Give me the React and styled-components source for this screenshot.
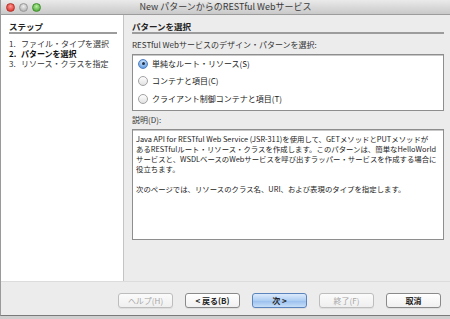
import React from "react";
import styled, { createGlobalStyle } from "styled-components";

const Global = createGlobalStyle`
  html, body { margin: 0; padding: 0; background: #cfcfcf; }
  body { font-family: "Noto Sans CJK JP", "DejaVu Sans", sans-serif; color: #222; }
`;

const Window = styled.div`
  width: 450px;
  height: 316px;
  box-sizing: border-box;
  border-left: 1px solid #9a9a9a;
  border-bottom: 1px solid #7a7a7a;
  background: #ececec;
  display: flex;
  flex-direction: column;
`;

const TitleBar = styled.div`
  height: 15px;
  flex: none;
  box-sizing: border-box;
  background: linear-gradient(#eaeaea, #c9c9c9);
  border-bottom: 1px solid #9c9c9c;
  display: flex;
  align-items: center;
  position: relative;
  padding-left: 5px;
`;

const Lights = styled.div`
  display: flex;
  gap: 4px;
`;

const Light = styled.span`
  width: 9px;
  height: 9px;
  border-radius: 50%;
  box-sizing: border-box;
  border: 1px solid ${(p) => p.$edge};
  background: radial-gradient(circle at 50% 35%, ${(p) => p.$hi}, ${(p) => p.$c} 70%);
`;

const Title = styled.div`
  position: absolute;
  left: 0;
  right: 0;
  top: 0;
  bottom: 0;
  text-align: center;
  font-size: 9px;
  line-height: 14px;
  color: #3a3a3a;
  pointer-events: none;
`;

const Body = styled.div`
  flex: none;
  height: 266px;
  display: flex;
`;

const LeftPane = styled.div`
  width: 123px;
  flex: none;
  box-sizing: border-box;
  background: #fff;
  border-right: 1px solid #c4c4c4;
  padding: 6px 6px 0 8px;
`;

const RightPane = styled.div`
  flex: 1;
  padding: 6px 6px 0 8px;
  display: flex;
  flex-direction: column;
`;

const Heading = styled.div`
  font-size: 8.5px;
  font-weight: bold;
  line-height: 11px;
  padding-bottom: 0;
  border-bottom: 2px solid #9c9c9c;
  margin-bottom: ${(p) => p.$gap || 4}px;
`;

const StepList = styled.ol`
  list-style: none;
  margin: 0;
  padding: 0;
  font-size: 8px;
  line-height: 10px;
`;

const Step = styled.li`
  display: flex;
  font-weight: ${(p) => (p.$active ? "bold" : "normal")};
  color: ${(p) => (p.$active ? "#111" : "#333")};
`;

const StepNum = styled.span`
  width: 12px;
  flex: none;
`;

const Label = styled.div`
  font-size: 8px;
  line-height: 10px;
  margin: 0 0 4px 0;
  color: #333;
`;

const RadioBox = styled.div`
  background: #fff;
  border: 1px solid #8e8e8e;
  box-shadow: inset 0 1px 0 #c8c8c8;
  height: 57px;
  box-sizing: border-box;
  display: flex;
  flex-direction: column;
  justify-content: space-around;
  padding: 0 5px 2px;
  margin-bottom: 4px;
`;

const RadioRow = styled.div`
  display: flex;
  align-items: center;
  gap: 4px;
  font-size: 8px;
  line-height: 10px;
  color: #222;
`;

const Radio = styled.span`
  width: 10px;
  height: 10px;
  border-radius: 50%;
  box-sizing: border-box;
  flex: none;
  position: relative;
  border: 1px solid ${(p) => (p.$on ? "#4f7fc0" : "#a2a2a2")};
  background: ${(p) =>
    p.$on
      ? "radial-gradient(circle at 50% 30%, #d4e6fb, #6aa2e4 75%)"
      : "linear-gradient(#fdfdfd, #e2e2e2)"};
  &::after {
    content: "";
    display: ${(p) => (p.$on ? "block" : "none")};
    position: absolute;
    left: 2.5px;
    top: 2.5px;
    width: 3px;
    height: 3px;
    border-radius: 50%;
    background: #1d2f4a;
  }
`;

const DescBox = styled.div`
  background: #fff;
  border: 1px solid #8e8e8e;
  box-shadow: inset 0 1px 0 #c8c8c8;
  height: 111px;
  box-sizing: border-box;
  padding: 4px 3px;
  font-size: 7.4px;
  line-height: 10px;
  color: #222;
  white-space: nowrap;
  overflow: hidden;
`;

const Para = styled.p`
  margin: 0 0 10px 0;
`;

const Footer = styled.div`
  flex: 1;
  border-top: 1px solid #dcdcdc;
  display: flex;
  justify-content: flex-end;
  align-items: flex-start;
  gap: 12px;
  padding: 11px 9px 0 0;
`;

const Button = styled.button`
  width: 55px;
  height: 15px;
  box-sizing: border-box;
  padding: 0;
  border-radius: 3px;
  font-family: inherit;
  font-size: 8px;
  line-height: 13px;
  font-weight: ${(p) => (p.$bold ? "bold" : "normal")};
  color: ${(p) => (p.disabled ? "#a6a6a6" : "#222")};
  border: 1px solid
    ${(p) => (p.$primary ? "#5b84bd" : p.disabled ? "#bdbdbd" : "#8a8a8a")};
  background: ${(p) =>
    p.$primary
      ? "linear-gradient(#dceafb, #a9cbf2 55%, #9cc2ee 56%, #c7def8)"
      : p.disabled
      ? "linear-gradient(#fbfbfb, #efefef)"
      : "linear-gradient(#ffffff, #f0f0f0)"};
  box-shadow: 0 1px 0 rgba(0, 0, 0, 0.06);
`;

export default function App() {
  return (
    <>
      <Global />
      <Window>
        <TitleBar>
          <Lights>
            <Light $c="#e0443e" $hi="#ff9a92" $edge="#b5312b" />
            <Light $c="#b9b9b9" $hi="#eeeeee" $edge="#999" />
            <Light $c="#5fb346" $hi="#b8f0a0" $edge="#3f8f2c" />
          </Lights>
          <Title>New パターンからのRESTful Webサービス</Title>
        </TitleBar>
        <Body>
          <LeftPane>
            <Heading $gap={5}>ステップ</Heading>
            <StepList>
              <Step><StepNum>1.</StepNum>ファイル・タイプを選択</Step>
              <Step $active><StepNum>2.</StepNum>パターンを選択</Step>
              <Step><StepNum>3.</StepNum>リソース・クラスを指定</Step>
            </StepList>
          </LeftPane>
          <RightPane>
            <Heading $gap={6}>パターンを選択</Heading>
            <Label>RESTful Webサービスのデザイン・パターンを選択:</Label>
            <RadioBox>
              <RadioRow><Radio $on />単純なルート・リソース(S)</RadioRow>
              <RadioRow><Radio />コンテナと項目(C)</RadioRow>
              <RadioRow><Radio />クライアント制御コンテナと項目(T)</RadioRow>
            </RadioBox>
            <Label>説明(D):</Label>
            <DescBox>
              <Para>
                Java API for RESTful Web Service (JSR-311)を使用して、GETメソッドとPUTメソッドが
                <br />
                あるRESTfulルート・リソース・クラスを作成します。このパターンは、簡単なHelloWorld
                <br />
                サービスと、WSDLベースのWebサービスを呼び出すラッパー・サービスを作成する場合に
                <br />
                役立ちます。
              </Para>
              <Para>次のページでは、リソースのクラス名、URI、および表現のタイプを指定します。</Para>
            </DescBox>
          </RightPane>
        </Body>
        <Footer>
          <Button disabled>ヘルプ(H)</Button>
          <Button $bold>&lt; 戻る(B)</Button>
          <Button $primary $bold>次 &gt;</Button>
          <Button disabled>終了(F)</Button>
          <Button $bold>取消</Button>
        </Footer>
      </Window>
    </>
  );
}
